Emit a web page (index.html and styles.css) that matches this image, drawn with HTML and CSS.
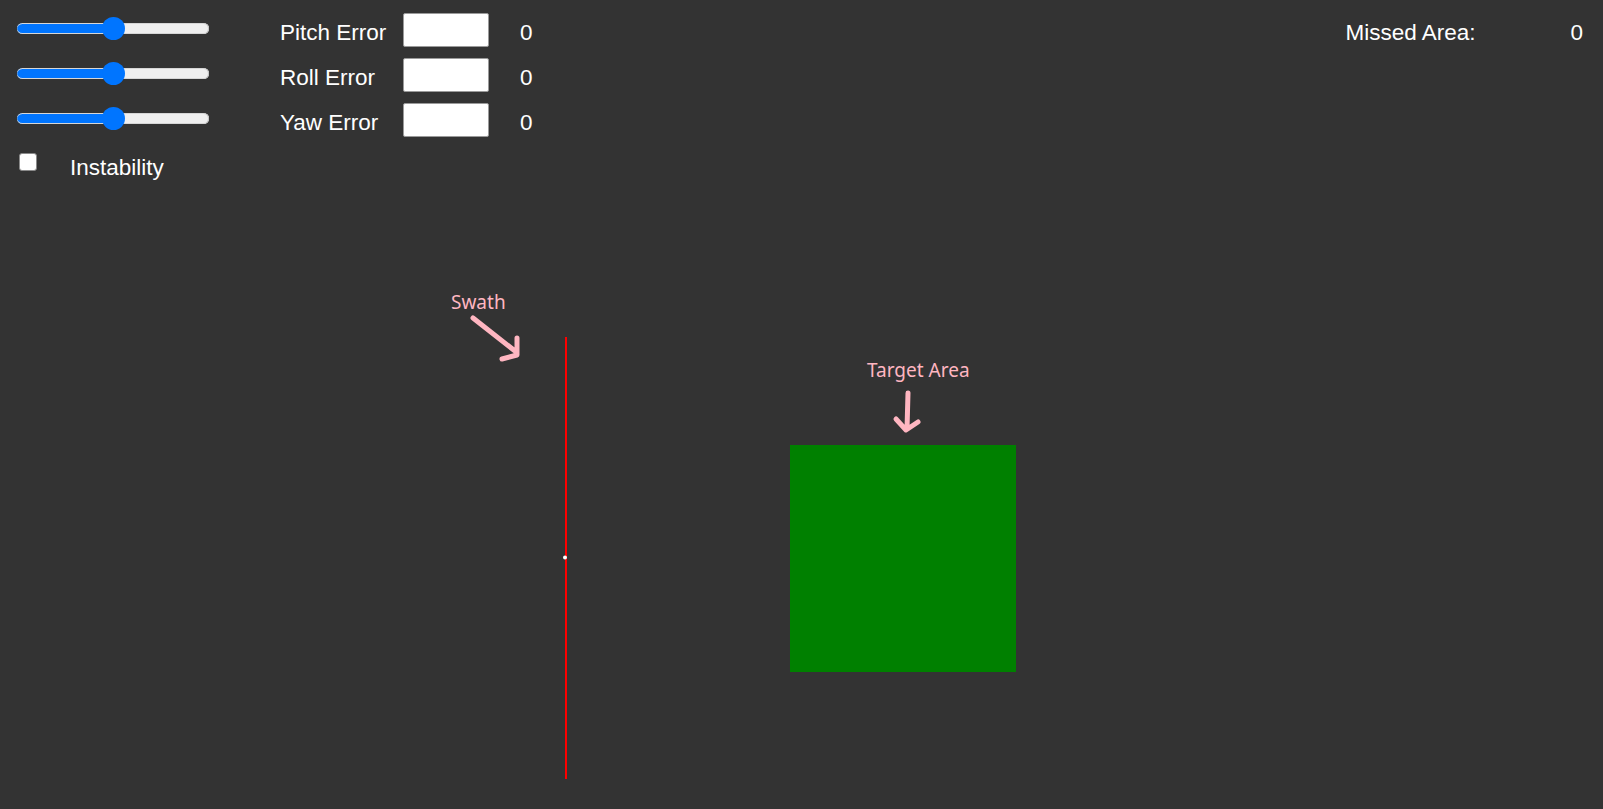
FILE: index.html
```html
<!DOCTYPE html>
<html>
<head>
<meta charset="utf-8">
<title>Swath Simulator</title>
<link rel="stylesheet" href="styles.css">
</head>
<body>
<div class="top">
  <div class="controls">
    <input class="slider" type="range" min="0" max="100" value="50">
    <input class="slider" type="range" min="0" max="100" value="50">
    <input class="slider" type="range" min="0" max="100" value="50">
    <label class="check-row">
      <input class="check" type="checkbox">
      <span class="check-label">Instability</span>
    </label>
  </div>
  <div class="errors">
    <span class="err-label">Pitch Error</span><input class="err-input" type="text"><span class="err-value">0</span>
    <span class="err-label">Roll Error</span><input class="err-input" type="text"><span class="err-value">0</span>
    <span class="err-label">Yaw Error</span><input class="err-input" type="text"><span class="err-value">0</span>
  </div>
  <div class="missed">
    <span class="missed-label">Missed Area:</span><span class="missed-value">0</span>
  </div>
</div>
<svg class="scene" width="1603" height="619" viewBox="0 190 1603 619" xmlns="http://www.w3.org/2000/svg">
  <text class="note" x="451" y="309">Swath</text>
  <path class="arrow" d="M473 318 L515 351 M517 338 L517 355 L502 359"/>
  <rect x="565" y="337" width="2" height="442" fill="#ff0000"/>
  <circle cx="565" cy="557.5" r="2" fill="#ffffff"/>
  <text class="note" x="867" y="377">Target Area</text>
  <path class="arrow" d="M908 393 L907 429 M896 419 L906 430 L918 422"/>
  <rect x="790" y="445" width="226" height="227" fill="#008000"/>
</svg>
</body>
</html>
```

FILE: styles.css
```css
html, body {
  margin: 0;
  padding: 0;
  background: #333333;
  color: #ffffff;
  font-family: "Liberation Sans", Arial, sans-serif;
  font-size: 22.5px;
  overflow: hidden;
}

.top {
  display: flex;
  height: 190px;
}

.controls {
  width: 279px;
  box-sizing: border-box;
  padding: 16.5px 0 0 17px;
  display: flex;
  flex-direction: column;
  align-items: flex-start;
}

.slider {
  -webkit-appearance: none;
  appearance: none;
  width: 192px;
  height: 23px;
  margin: 0 0 22px 0;
  padding: 0;
  background: transparent;
}

.slider::-webkit-slider-runnable-track {
  height: 11px;
  border-radius: 6px;
  background: linear-gradient(to right, #0075ff 50%, #efefef 50%);
  box-shadow: inset -1px 0 0 #c4c4c4, inset 0 1px 0 #d6d6d6, inset 0 -1px 0 #d6d6d6;
}

.slider::-webkit-slider-thumb {
  -webkit-appearance: none;
  appearance: none;
  width: 23px;
  height: 23px;
  margin-top: -6px;
  border: none;
  border-radius: 50%;
  background: #0075ff;
}

.check-row {
  display: flex;
  align-items: flex-start;
  margin-top: 1.5px;
}

.check {
  -webkit-appearance: none;
  appearance: none;
  width: 18px;
  height: 18px;
  margin: 0 0 0 2px;
  box-sizing: border-box;
  background: #ffffff;
  border: 1px solid #8a8a8a;
  border-radius: 3px;
}

.check-label {
  margin-left: 33px;
  margin-top: 2px;
  line-height: 26px;
}

.errors {
  display: grid;
  grid-template-columns: 124px 86px 60px;
  grid-auto-rows: 34px;
  row-gap: 11px;
  padding-top: 13px;
  align-items: start;
}

.err-label {
  line-height: 34px;
  margin-top: 2.5px;
  padding-left: 1px;
  white-space: nowrap;
}

.err-input {
  width: 86px;
  height: 34px;
  box-sizing: border-box;
  margin: 0;
  padding: 0;
  background: #ffffff;
  border: 1px solid #9a9a9a;
  border-radius: 2px;
}

.err-value {
  line-height: 34px;
  margin-top: 2.5px;
  padding-left: 31px;
}

.missed {
  margin-left: auto;
  padding: 15.5px 20px 0 0;
  display: flex;
  align-items: flex-start;
  line-height: 34px;
}

.missed-label {
  width: 225px;
}

.scene {
  display: block;
}

.note {
  fill: #ffb6c1;
  font-family: "Noto Sans", "Open Sans", sans-serif;
  font-size: 19px;
}

.arrow {
  fill: none;
  stroke: #ffb6c1;
  stroke-width: 5;
  stroke-linecap: round;
  stroke-linejoin: round;
}
```
